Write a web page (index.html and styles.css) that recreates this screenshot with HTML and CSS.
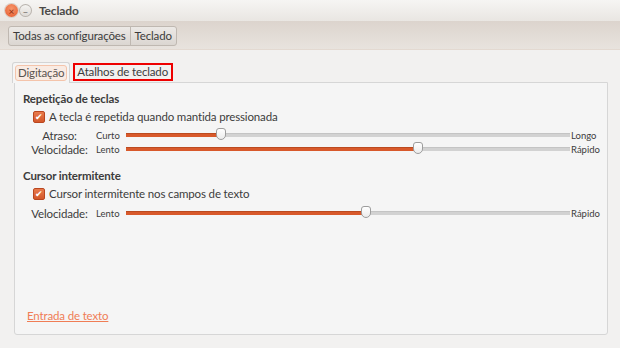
FILE: index.html
```html
<!DOCTYPE html>
<html lang="pt">
<head>
    <meta charset="UTF-8">
    <title>Teclado</title>
    <link rel="stylesheet" href="styles.css">
</head>
<body>
    <div class="window">
        <div class="titlebar">
            <span class="wbtn close">&#215;</span>
            <span class="wbtn minimize">&#8211;</span>
            <span class="title">Teclado</span>
        </div>
        <div class="toolbar">
            <div class="crumbs">
                <span class="crumb">Todas as configurações</span>
                <span class="crumb">Teclado</span>
            </div>
        </div>
        <div class="content">
            <div class="tabs">
                <div class="tab active"><span class="tab-label">Digitação</span></div>
                <div class="tab"><span class="tab-label marked">Atalhos de teclado</span></div>
            </div>
            <div class="notebook">
                <h2>Repetição de teclas</h2>
                <label class="check"><span class="box">&#10004;</span>A tecla é repetida quando mantida pressionada</label>
                <div class="row first">
                    <span class="name">Atraso:</span>
                    <span class="min">Curto</span>
                    <div class="slider"><div class="fill" style="width: 21.4%"></div><div class="knob" style="left: 21.4%"></div></div>
                    <span class="max">Longo</span>
                </div>
                <div class="row">
                    <span class="name">Velocidade:</span>
                    <span class="min">Lento</span>
                    <div class="slider"><div class="fill" style="width: 65.8%"></div><div class="knob" style="left: 65.8%"></div></div>
                    <span class="max">Rápido</span>
                </div>

                <h2 class="second">Cursor intermitente</h2>
                <label class="check"><span class="box">&#10004;</span>Cursor intermitente nos campos de texto</label>
                <div class="row spaced">
                    <span class="name">Velocidade:</span>
                    <span class="min">Lento</span>
                    <div class="slider"><div class="fill" style="width: 54.1%"></div><div class="knob" style="left: 54.1%"></div></div>
                    <span class="max">Rápido</span>
                </div>

                <div class="spacer"></div>
                <a class="link" href="#">Entrada de texto</a>
            </div>
        </div>
    </div>
</body>
</html>
```

FILE: styles.css
```css
body {
    margin: 0;
    font-family: Lato, "Noto Sans", sans-serif;
    font-size: 11.5px;
    letter-spacing: -0.15px;
    color: #3c3c3c;
}
.window {
    width: 620px;
    height: 348px;
    background: #f2f1f0;
    overflow: hidden;
}
.titlebar {
    height: 21px;
    display: flex;
    align-items: center;
    padding-left: 5px;
    background: linear-gradient(#f6f5f3, #e9e6e2);
}
.wbtn {
    width: 13px;
    height: 13px;
    border-radius: 50%;
    display: flex;
    align-items: center;
    justify-content: center;
    font-size: 10px;
    line-height: 1;
    margin-right: 1px;
    letter-spacing: 0;
}
.close {
    background: radial-gradient(circle at 50% 35%, #f7966b, #e4592c);
    color: #8e2e10;
    box-shadow: 0 0 0 1px #d9cfc6;
}
.minimize {
    background: linear-gradient(#f7f6f4, #dcd8d3);
    color: #6e6a66;
    box-shadow: inset 0 0 0 1px #b9b3ad;
}
.title {
    margin-left: 6px;
    font-weight: bold;
    font-size: 12px;
    color: #4b4a48;
}
.toolbar {
    height: 28px;
    border-bottom: 1px solid #e3d9d1;
    background: linear-gradient(#dcd4cd, #e8e3de);
    display: flex;
    align-items: center;
    padding-left: 8px;
}
.crumbs {
    display: flex;
    border: 1px solid #bfb8b1;
    border-radius: 3px;
    background: linear-gradient(#ece9e6, #dbd6d1);
    margin-top: 2px;
}
.crumb {
    padding: 0 4px;
    line-height: 18px;
    color: #3c3c3c;
}
.crumb + .crumb {
    border-left: 1px solid #bfb8b1;
}
.content {
    padding: 13px 12px 0 14px;
}
.tabs {
    display: flex;
    align-items: flex-end;
    height: 19px;
    margin-left: -2px;
}
.tab {
    padding: 2px 2px 1px 2px;
}
.tab.active {
    background: #f5f5f5;
    border: 1px solid #d4d4d4;
    border-bottom: none;
    border-radius: 3px 3px 0 0;
    padding-bottom: 2px;
    margin-bottom: -1px;
    position: relative;
}
.tab-label {
    display: block;
    padding: 0 2px;
    line-height: 14px;
    border: 1px solid transparent;
}
.active .tab-label {
    border-color: #f4c4ab;
    border-radius: 3px;
    background: #f9ebe3;
    color: #5a5450;
}
.marked {
    border: 2px solid #ee0000;
    padding: 0 3px 0 2px;
    margin-left: 1px;
    line-height: 14px;
}
.notebook {
    height: 253px;
    background: #f5f5f5;
    border: 1px solid #d6d6d6;
    border-radius: 0 0 3px 3px;
    padding-left: 8px;
    display: flex;
    flex-direction: column;
    box-sizing: border-box;
}
h2 {
    margin: 9px 0 0 0;
    height: 14px;
    line-height: 14px;
    font-size: 11.5px;
    font-weight: bold;
    color: #3c3c3c;
}
h2.second {
    margin-top: 13px;
}
.check {
    display: flex;
    align-items: center;
    margin: 3px 0 0 10px;
    height: 15px;
    line-height: 15px;
}
.box {
    width: 12px;
    height: 12px;
    border-radius: 2px;
    background: linear-gradient(#e87a4c, #d4582a);
    border: 1px solid #b9461f;
    box-sizing: border-box;
    color: #fff;
    font-size: 9px;
    line-height: 10px;
    text-align: center;
    margin-right: 4px;
    letter-spacing: 0;
}
.row {
    display: flex;
    align-items: center;
    height: 14px;
}
.row.first {
    margin-top: 4px;
}
.row.spaced {
    margin-top: 5px;
}
.name {
    width: 73px;
    text-align: center;
    font-size: 11.5px;
}
.min {
    width: 30px;
    font-size: 9.5px;
    letter-spacing: 0;
}
.max {
    font-size: 9.5px;
    letter-spacing: 0;
    margin-left: 1px;
}
.slider {
    width: 444px;
    height: 3px;
    background: #d2d2d2;
    border-top: 1px solid #c4c4c4;
    position: relative;
}
.fill {
    margin-top: -1px;
    background: #d8592b;
    border-top: 1px solid #bb4a20;
    box-sizing: border-box;
    height: 4px;
}
.knob {
    position: absolute;
    top: -6px;
    width: 10px;
    height: 12px;
    margin-left: -5px;
    background: linear-gradient(#ffffff, #ececec);
    border: 1px solid #9d9d9d;
    border-radius: 3px 3px 5px 5px;
    box-sizing: border-box;
}
.spacer {
    flex: 1;
}
.link {
    margin-left: 4px;
    color: #f07d55;
    text-decoration: underline;
    font-size: 11.5px;
    line-height: 14px;
    margin-bottom: 11px;
}
```
